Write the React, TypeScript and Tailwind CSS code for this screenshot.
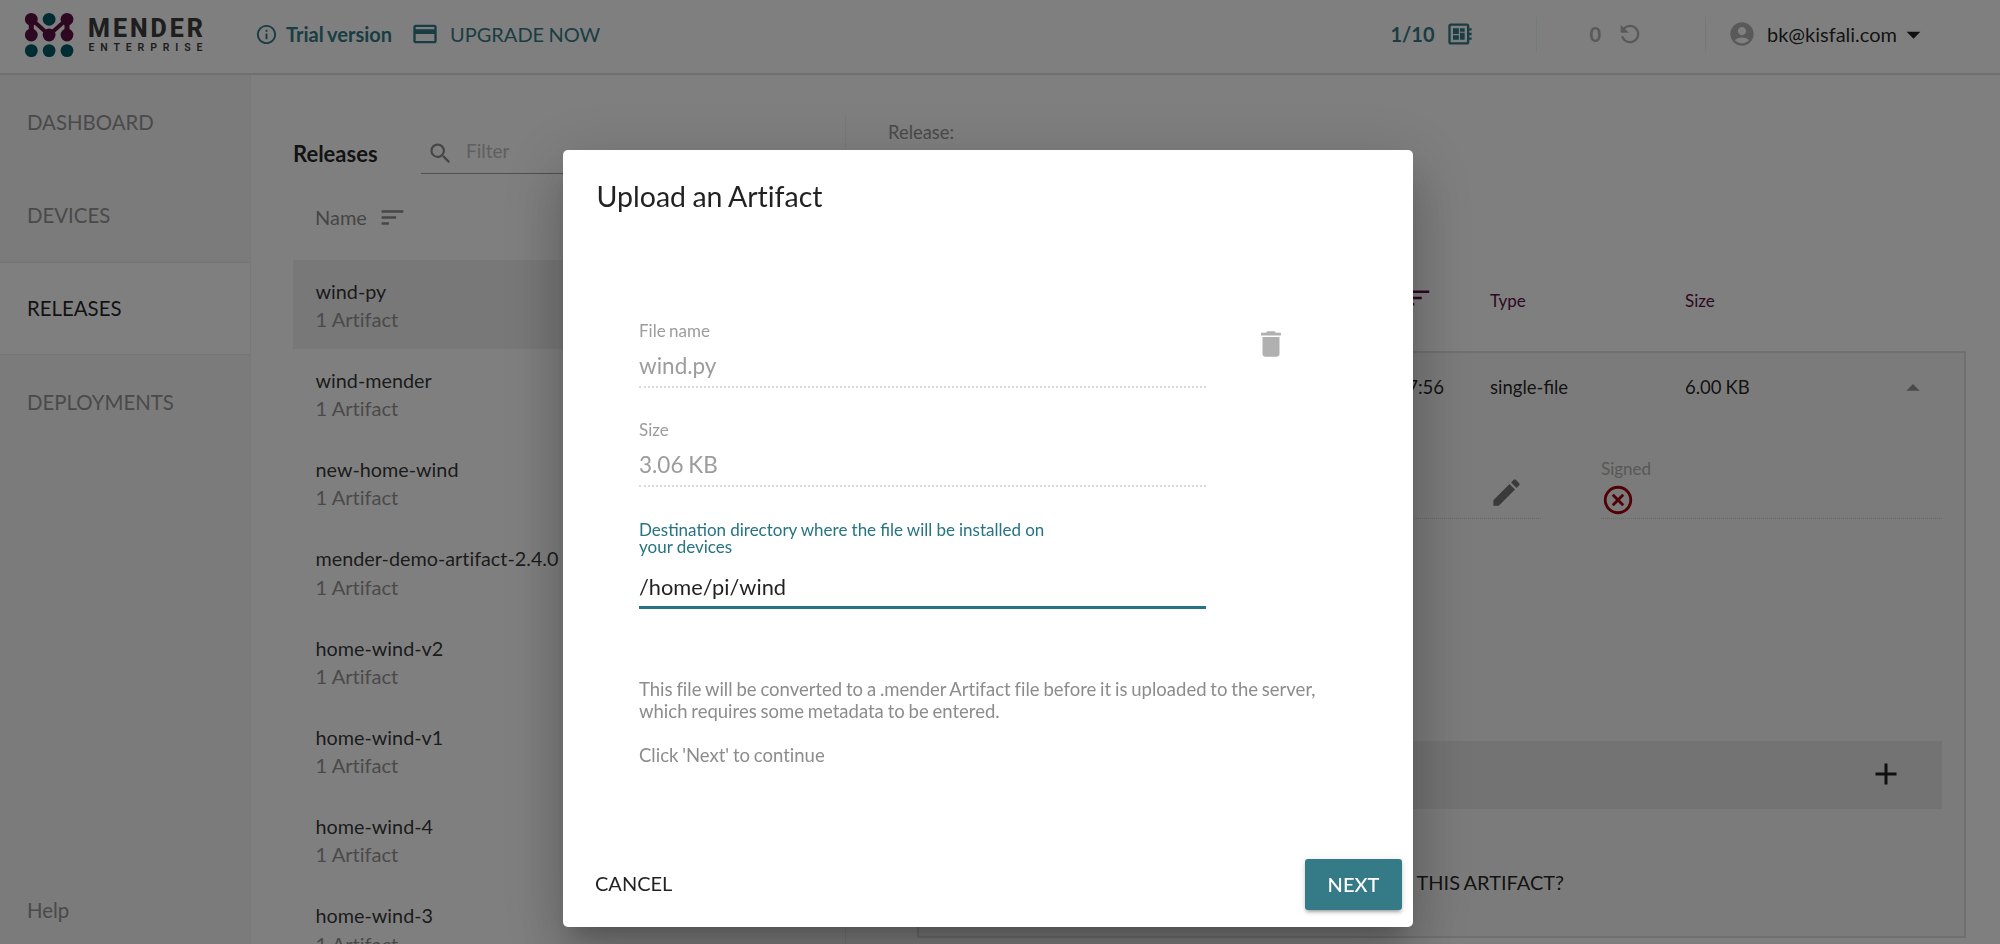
import {
  MdAccountCircle,
  MdAdd,
  MdArrowDropDown,
  MdArrowDropUp,
  MdDelete,
  MdDeveloperBoard,
  MdEdit,
  MdInfoOutline,
  MdPayment,
  MdRefresh,
  MdSearch,
  MdSort,
} from "react-icons/md";

const navItems = [
  { title: "DASHBOARD", active: false },
  { title: "DEVICES", active: false },
  { title: "RELEASES", active: true },
  { title: "DEPLOYMENTS", active: false },
];

const releases = [
  "wind-py",
  "wind-mender",
  "new-home-wind",
  "mender-demo-artifact-2.4.0",
  "home-wind-v2",
  "home-wind-v1",
  "home-wind-4",
  "home-wind-3",
];

const Logo = () => (
  <svg width="180" height="46" viewBox="0 0 180 46" className="mt-px shrink-0">
    <g stroke="#5d0f43" strokeWidth="5" fill="none">
      <path d="M6.3 7v16M42 7v16" />
      <path d="M6.3 7l17.8 16L42 7" strokeWidth="4" />
    </g>
    <g fill="#5d0f43">
      <circle cx="6.3" cy="7.3" r="6.4" />
      <circle cx="42" cy="7.3" r="6.4" />
      <circle cx="6.3" cy="23" r="6.4" />
      <circle cx="24.1" cy="23" r="6.4" />
      <circle cx="42" cy="23" r="6.4" />
    </g>
    <g fill="#015969">
      <circle cx="24.1" cy="7.3" r="6.4" />
      <circle cx="6.3" cy="38.6" r="6.4" />
      <circle cx="24.1" cy="38.6" r="6.4" />
      <circle cx="42" cy="38.6" r="6.4" />
    </g>
    <text x="63" y="25.3" textLength="115" className="fill-[#3c3c3c] font-[Roboto] text-[25px] font-extrabold">
      MENDER
    </text>
    <text x="63.5" y="38.5" textLength="114" className="fill-[#3c3c3c] font-[Roboto] text-[10.5px] font-semibold">
      ENTERPRISE
    </text>
  </svg>
);

const NotSignedIcon = () => (
  <svg width="34" height="34" viewBox="0 0 24 24" fill="none" stroke="#a3000b" strokeWidth="2" className="-mt-[3px]">
    <circle cx="12" cy="12" r="9" />
    <path d="M8.3 8.3l7.4 7.4M15.7 8.3l-7.4 7.4" />
  </svg>
);

const Header = () => (
  <header className="flex h-[75px] shrink-0 items-center border-b-2 border-[#e0e0e0] pb-[5px] pl-[25px] text-[20px] text-[#347a87]">
    <Logo />
    <MdInfoOutline size={23} className="ml-[50px] mr-[8px]" />
    <span className="w-[127px] font-bold">Trial version</span>
    <MdPayment size={28} className="-ml-[2px] mr-[12px]" />
    <span className="-ml-px">UPGRADE NOW</span>
    <div className="ml-auto flex items-center">
      <span className="w-[56px] font-bold">1/10</span>
      <MdDeveloperBoard size={28} />
      <div className="ml-[62px] h-[35px] w-px bg-[#e9f2f2]" />
      <span className="ml-[52px] font-bold text-[#b3b3b3]">0</span>
      <MdRefresh size={28} className="ml-[15px] -scale-x-100 text-[#b3b3b3]" />
      <div className="ml-[61px] h-[35px] w-px bg-[#e9f2f2]" />
      <MdAccountCircle size={28} className="ml-[22px] text-[#b3b3b3]" />
      <span className="ml-[11px] w-[130px] whitespace-nowrap text-black/87">bk@kisfali.com</span>
      <MdArrowDropDown size={33} className="mr-[70px] text-black/87" />
    </div>
  </header>
);

const Sidebar = () => (
  <nav className="flex w-[251px] shrink-0 flex-col border-r border-[#e9f2f2] bg-[#f7f7f7] text-[20.4px] text-[#949494]">
    {navItems.map(({ title, active }) => (
      <div
        key={title}
        className={`flex h-[93.3px] items-center pl-[27px] pt-px ${
          active ? "border-y border-[#e0eeee] bg-white text-black/87" : ""
        }`}
      >
        {title}
      </div>
    ))}
    <div className="mb-[18px] mt-auto pl-[27px]">Help</div>
  </nav>
);

const ReleasesList = () => (
  <section className="flex w-[594px] shrink-0 flex-col pl-[42px] pt-[58px]">
    <div className="flex h-[41px] shrink-0 items-center">
      <h3 className="w-[128px] text-[22px] font-bold text-black/87">Releases</h3>
      <div className="flex h-full w-[300px] items-center border-b border-[#a0a0a0] pl-[6px]">
        <MdSearch size={27} className="text-[#8c8c8c]" />
        <span className="ml-[12px] pb-1 text-[19px] text-[#c0c0c0]">Filter</span>
      </div>
    </div>
    <div className="mt-[28px] flex h-[30px] shrink-0 items-center pl-[22px] text-[20px] text-[#8c8c8c]">
      Name
      <MdSort size={29} className="ml-[11px]" />
    </div>
    <div className="mt-[28px]">
      {releases.map((name, index) => (
        <div
          key={name}
          className={`h-[89.25px] pl-[22.5px] pt-[16.5px] text-[19.8px] leading-[28.4px] ${
            index === 0 ? "bg-[#f0f0f0]" : ""
          }`}
        >
          <div className="whitespace-nowrap text-black/80">{name}</div>
          <div className="text-[20.1px] text-[#949494] [word-spacing:0]">1 Artifact</div>
        </div>
      ))}
    </div>
  </section>
);

const ArtifactDetails = () => (
  <section className="mt-[40px] flex grow flex-col border-l border-[#e9f2f2] pl-[42px] pr-[34px]">
    <div className="pt-[5px] text-[18.4px] leading-[24px] text-[#949494]">Release:</div>
    <div className="mt-[141px] flex h-[32px] items-center pl-[515px] text-[17px] text-[#5d0f43]">
      <MdSort size={30} className="mb-[6px]" />
      <span className="ml-[57px] w-[195px]">Type</span>
      <span>Size</span>
    </div>
    <div className="ml-[29px] mt-[34px] flex h-[587px] shrink-0 flex-col border-2 border-[#e0e0e0] bg-[#f7f7f7] text-[18.5px] text-black/87">
      <div className="flex h-[69px] items-center">
        <span className="w-[525px] text-right">2020-10-08 17:56</span>
        <span className="ml-[46px] w-[195px] [font-variant-ligatures:normal]">single-file</span>
        <span>6.00 KB</span>
        <MdArrowDropUp size={32} className="ml-auto mr-[35px] text-[#949494]" />
      </div>
      <div className="mr-[22px] mt-[30px] flex h-[67px] justify-end">
        <div className="flex w-[600px] items-center justify-end border-b border-dotted border-[#cfcfcf] pr-[17px] pt-[15px]">
          <MdEdit size={35} className="text-[#757575]" />
        </div>
        <div className="ml-[60px] w-[341px] border-b border-dotted border-[#cfcfcf] text-[17px] leading-[34px] text-[#b0b0b0]">
          Signed
          <NotSignedIcon />
        </div>
      </div>
      <div className="mx-[22px] mt-[222px] flex h-[68px] shrink-0 items-center justify-end bg-[#e7e7e7] pb-[2px] pr-[38px]">
        <MdAdd size={36} />
      </div>
      <div className="mt-[58px] w-[645px] text-right text-[20px]">THIS ARTIFACT?</div>
    </div>
  </section>
);

const DisabledField = ({ label, value }: { label: string; value: string }) => (
  <div className="h-[99.3px] w-[567px] text-[#9c9c9c]">
    <div className="text-[17px] leading-[22px]">{label}</div>
    <div className="mt-[7px] h-[39px] border-b-2 border-dotted border-[#dadada] text-[22.5px] leading-[34px]">
      {value}
    </div>
  </div>
);

const UploadDialog = () => (
  <div className="fixed inset-0 bg-black/50 pl-[563px] pt-[150px]">
    <div
      role="dialog"
      className="flex h-[777px] w-[850px] flex-col rounded-[5px] bg-white shadow-[0_16px_21px_-10px_rgba(0,0,0,0.2),0_34px_54px_4px_rgba(0,0,0,0.14),0_13px_65px_11px_rgba(0,0,0,0.12)]"
    >
      <h2 className="pl-[33.5px] pt-[28px] text-[28.5px] leading-[36px] text-black/87">Upload an Artifact</h2>
      <div className="mt-[106px] flex h-[198.6px] pl-[76px]">
        <div className="w-[615px]">
          <DisabledField label="File name" value="wind.py" />
          <DisabledField label="Size" value="3.06 KB" />
        </div>
        <MdDelete size={34} className="mt-[7px] text-[#b0b0b0]" />
      </div>
      <div className="ml-[76px] mt-[2px] w-[567px]">
        <label className="block w-[425px] text-[17px] leading-[17px] text-[#267482] [font-variant-ligatures:normal] [word-spacing:-0.2px]">
          Destination directory where the file will be installed on your devices
        </label>
        <div className="mt-[12px] h-[42px] border-b-[3px] border-[#267482] text-[21.8px] leading-[39px] text-black/87">
          /home/pi/wind
        </div>
      </div>
      <div className="ml-[76px] mt-[69px] w-[700px] text-[18.5px] leading-[22.7px] text-[#8c8c8c]">
        <p>
          This file will be converted to a .mender Artifact file before it is uploaded to the server,
          <br />
          which requires some metadata to be entered.
        </p>
        <p className="mt-[21px]">Click 'Next' to continue</p>
      </div>
      <div className="mb-[17px] mt-auto flex items-center justify-between pl-[32px] pr-[11px] text-[20px]">
        <button className="pb-[3px] text-black/87">CANCEL</button>
        <button className="h-[51px] w-[97px] rounded-[3px] bg-[#347a87] pb-[2px] font-medium text-white shadow-[0_4px_2px_-3px_rgba(0,0,0,0.2),0_3px_3px_0_rgba(0,0,0,0.14),0_1px_7px_0_rgba(0,0,0,0.12)]">
          NEXT
        </button>
      </div>
    </div>
  </div>
);

export default function App() {
  return (
    <div className="flex h-[944px] w-[2000px] flex-col overflow-hidden bg-white font-[Lato,sans-serif] [font-variant-ligatures:none] [word-spacing:-0.9px]">
      <Header />
      <div className="flex min-h-0 grow overflow-hidden">
        <Sidebar />
        <ReleasesList />
        <ArtifactDetails />
      </div>
      <UploadDialog />
    </div>
  );
}
